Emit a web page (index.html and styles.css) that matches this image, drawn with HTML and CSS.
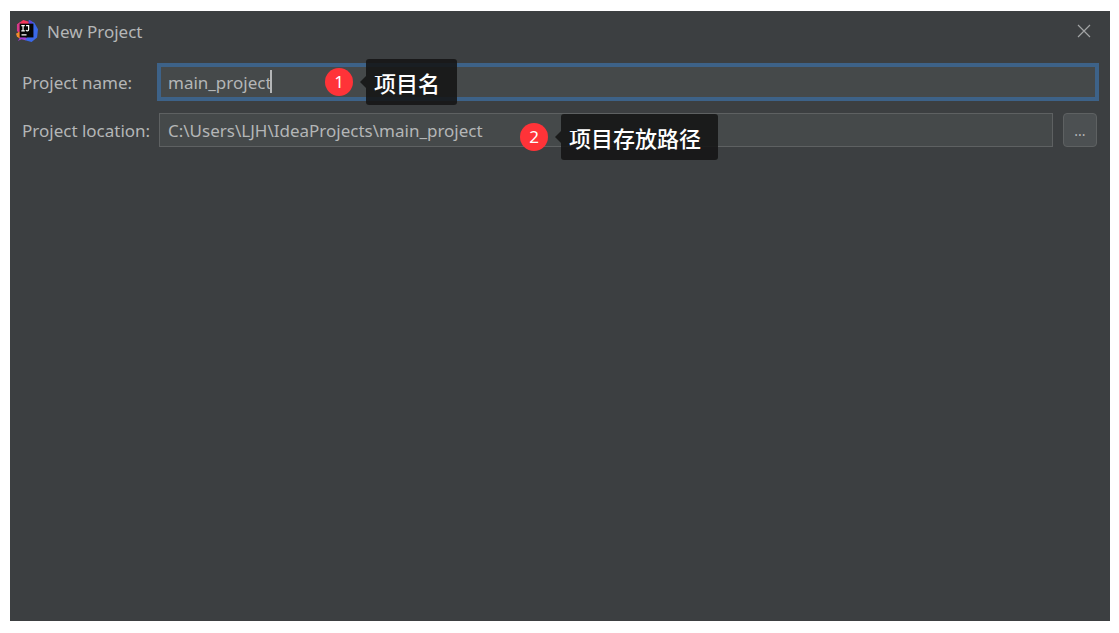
FILE: index.html
```html
<!DOCTYPE html>
<html lang="en">
<head>
  <meta charset="UTF-8" />
  <meta name="viewport" content="width=device-width, initial-scale=1.0"/>
  <title>New Project</title>
  <link rel="stylesheet" href="styles.css">
</head>
<body>
  <main class="dialog">
    <header class="title-bar">
      <svg class="logo" viewBox="0 0 24 24" aria-hidden="true">
        <path fill="#f5365c" d="M1 5 8 0l6 2v8l-9 6-3-3z"/>
        <path fill="#d63a8a" d="M1 5l4-3 1 9-2 3-3-2z"/>
        <path fill="#f58b2e" d="M0 15l5-3 3 8-3 1-4-3z"/>
        <path fill="#a43bd0" d="M2 23l4-6 9 4-5 1-4-1z"/>
        <path fill="#3a68e8" d="M14 0l6 3 4 7-1 9-6 5-7-2 4-6z"/>
        <path fill="#5a45d8" d="M14 0l3 1 2 5-5 2z"/>
        <path fill="#050505" d="M4 4h15v15H4z"/>
        <path fill="none" stroke="#fff" stroke-width="1.3" d="M5.8 6.2h3.8M7.7 6.2v5.6M5.8 11.8h3.8M11 6.2h2.8v4.1c0 1-.5 1.5-1.4 1.5-.7 0-1.2-.3-1.6-.8M6 16.2h5.5"/>
      </svg>
      <h1>New Project</h1>
      <button class="close" type="button" aria-label="Close">
        <svg viewBox="0 0 14 14"><path d="M1 1l12 12M13 1L1 13"/></svg>
      </button>
    </header>
    <form class="project-form">
      <label for="project-name">Project name:</label>
      <div class="field">
        <input class="active" id="project-name" type="text" value="main_project" spellcheck="false">
        <span class="caret"></span>
        <div class="note note-name">
          <span class="badge">1</span>
          <span class="bubble" lang="zh-CN">项目名</span>
        </div>
      </div>
      <label for="project-location">Project location:</label>
      <div class="field">
        <input id="project-location" type="text" value="C:\Users\LJH\IdeaProjects\main_project" spellcheck="false">
        <button class="browse" type="button" aria-label="Browse">...</button>
        <div class="note note-location">
          <span class="badge">2</span>
          <span class="bubble" lang="zh-CN">项目存放路径</span>
        </div>
      </div>
    </form>
  </main>
</body>
</html>
```
FILE: styles.css
```css
:root {
  --panel: #3c3f41;
  --field: #45494a;
  --line: #5e6162;
  --text: #b4b6b7;
  --focus: #3d6288;
  --badge: #ff3338;
}
* {
  box-sizing: border-box;
  margin: 0;
  padding: 0;
}
body {
  display: flex;
  min-height: 100vh;
  padding: 11px 9px 12px 10px;
  background: #fff;
  color: var(--text);
  font-family: "Noto Sans", "Noto Sans CJK SC", sans-serif;
  font-size: 17px;
}
button,
input {
  font: inherit;
  color: inherit;
}
.dialog {
  flex: 1;
  background: var(--panel);
}
.title-bar {
  display: flex;
  align-items: center;
  height: 40px;
  padding: 0 19px 0 6px;
}
.logo {
  width: 22px;
  height: 22px;
}
.title-bar h1 {
  flex: 1;
  margin-left: 9px;
  font-size: 17px;
  font-weight: 400;
}
.close {
  display: flex;
  border: none;
  background: none;
}
.close svg {
  width: 14px;
  height: 14px;
  fill: none;
  stroke: #a2a4a5;
  stroke-width: 1.2;
}
.project-form {
  display: grid;
  grid-template-columns: 137px 1fr;
  row-gap: 14px;
  align-items: center;
  padding: 14px 13px 14px 12px;
}
.field {
  position: relative;
  display: flex;
  gap: 10px;
}
.field input {
  flex: 1;
  min-width: 0;
  height: 34px;
  padding: 0 8px;
  border: 1px solid var(--line);
  background: var(--field);
  outline: none;
}
.field input.active {
  border: 2px solid var(--focus);
  padding: 0 7px;
  box-shadow: 0 0 0 2px var(--focus);
}
.caret {
  position: absolute;
  top: 5px;
  left: 111px;
  width: 2px;
  height: 23px;
  background: var(--text);
}
.browse {
  width: 34px;
  height: 34px;
  border: 1px solid var(--line);
  border-radius: 4px;
  background: #4c5052;
  font-size: 14px;
}
.note {
  position: absolute;
  display: flex;
  align-items: center;
  gap: 13px;
}
.note-name {
  top: -6px;
  left: 166px;
}
.note-location {
  top: 1px;
  left: 361px;
}
.badge {
  width: 28px;
  height: 28px;
  border-radius: 50%;
  background: var(--badge);
  color: #fff;
  line-height: 28px;
  text-align: center;
}
.bubble {
  position: relative;
  padding: 0 17px 0 8px;
  border-radius: 3px;
  background: rgba(20, 20, 20, 0.88);
  color: #fff;
  font-family: "Noto Sans CJK SC", sans-serif;
  font-size: 22px;
  font-weight: 500;
  line-height: 46px;
  white-space: nowrap;
}
.bubble::before {
  content: '';
  position: absolute;
  top: 17px;
  right: 100%;
  border: 6px solid transparent;
  border-left: none;
  border-right-color: rgba(20, 20, 20, 0.88);
}
```
